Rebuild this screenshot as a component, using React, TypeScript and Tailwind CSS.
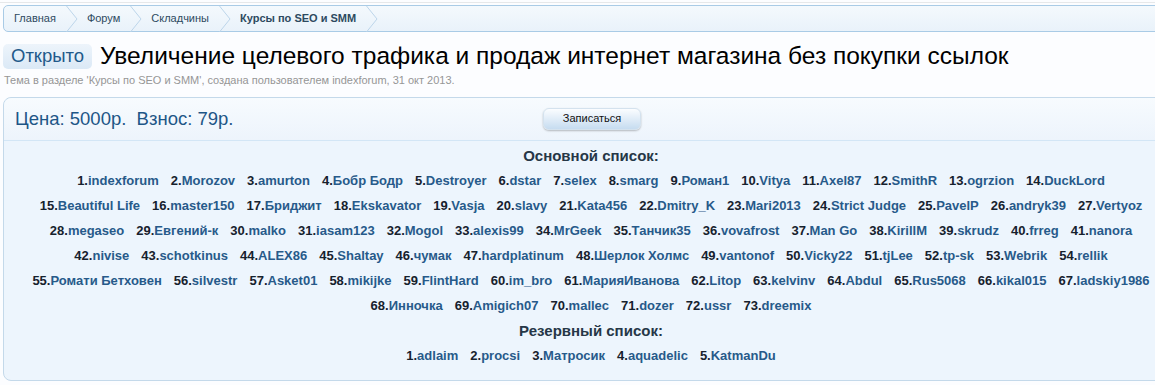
import React from 'react';

const crumbs = ['Главная', 'Форум', 'Складчины'];

const mainRows: string[][] = [
  ['indexforum', 'Morozov', 'amurton', 'Бобр Бодр', 'Destroyer', 'dstar', 'selex', 'smarg', 'Роман1', 'Vitya', 'Axel87', 'SmithR', 'ogrzion', 'DuckLord'],
  ['Beautiful Life', 'master150', 'Бриджит', 'Ekskavator', 'Vasja', 'slavy', 'Kata456', 'Dmitry_K', 'Mari2013', 'Strict Judge', 'PavelP', 'andryk39', 'Vertyoz'],
  ['megaseo', 'Евгений-к', 'malko', 'iasam123', 'Mogol', 'alexis99', 'MrGeek', 'Танчик35', 'vovafrost', 'Man Go', 'KirillM', 'skrudz', 'frreg', 'nanora'],
  ['nivise', 'schotkinus', 'ALEX86', 'Shaltay', 'чумак', 'hardplatinum', 'Шерлок Холмс', 'vantonof', 'Vicky22', 'tjLee', 'tp-sk', 'Webrik', 'rellik'],
  ['Ромати Бетховен', 'silvestr', 'Asket01', 'mikijke', 'FlintHard', 'im_bro', 'МарияИванова', 'Litop', 'kelvinv', 'Abdul', 'Rus5068', 'kikal015', 'ladskiy1986'],
  ['Инночка', 'Amigich07', 'mallec', 'dozer', 'ussr', 'dreemix'],
];

const reserve = ['adlaim', 'procsi', 'Матросик', 'aquadelic', 'KatmanDu'];

const Chevron = () => (
  <svg width="12" height="26" viewBox="0 0 12 26" className="shrink-0">
    <polyline points="0.5,0 11,13 0.5,26" fill="none" stroke="#bcd5ea" strokeWidth="1" />
  </svg>
);

const Entry = ({ n, name }: { n: number; name: string }) => (
  <span className="font-bold whitespace-nowrap">
    <span className="text-[#16212d]">{n}.</span>
    <span className="text-[#275a8a]">{name}</span>
  </span>
);

export default function App() {
  let counter = 0;
  return (
    <div
      className="min-h-[385px] w-[1155px] overflow-hidden bg-[#fcfdff] pt-[2px]"
      style={{ fontFamily: '"Liberation Sans", Arial, sans-serif' }}
    >
      <div className="border-t border-[#e6e8ea] pt-[2px]">
        {/* breadcrumb */}
        <div className="ml-[3px] flex h-[27px] w-[1170px] items-center rounded-l-[5px] border border-[#a9cbe6] bg-gradient-to-b from-[#f4f9fd] to-[#e9f2fa] pl-[10px] text-[11px] text-[#2d4a60]">
          {crumbs.map((c) => (
            <React.Fragment key={c}>
              <span className="mr-[10px]">{c}</span>
              <Chevron />
              <span className="w-[9px]" />
            </React.Fragment>
          ))}
          <span className="mr-[10px] font-bold">Курсы по SEO и SMM</span>
          <Chevron />
        </div>

        {/* title */}
        <div className="mt-[12px] flex items-center pl-[3px]">
          <span className="flex h-[25px] items-center rounded-[5px] bg-gradient-to-b from-[#edf4fb] to-[#dbe9f6] px-[8px] text-[18.5px] leading-none text-[#22598a]">
            Открыто
          </span>
          <h1 className="ml-[8px] text-[24.5px] leading-none text-black">
            Увеличение целевого трафика и продаж интернет магазина без покупки ссылок
          </h1>
        </div>
        <div className="mt-[3px] pl-[4px] text-[11px] text-[#969696]">
          Тема в разделе 'Курсы по SEO и SMM', создана пользователем indexforum, 31 окт 2013.
        </div>

        {/* card */}
        <div className="mt-[8px] ml-[3px] w-[1164px] rounded-l-[8px] border border-[#c4d9ea] bg-[#edf5fd]">
          <div className="flex h-[42px] items-center rounded-tl-[8px] bg-gradient-to-b from-[#f7fbfe] to-[#edf4fc] pl-[11px]">
            <span className="w-[528px] text-[18.5px] text-[#1e5687]">Цена: 5000р.&nbsp; Взнос: 79р.</span>
            <button className="h-[22px] w-[98px] rounded-[6px] border border-[#d4e2ee] bg-gradient-to-b from-[#fbfdff] to-[#c6dcf0] text-[11px] text-[#111] shadow-[0_1px_2px_rgba(0,0,0,0.25)]">
              Записаться
            </button>
          </div>
          <div className="border-t border-[#d3e6f6] pl-[12px] pt-[2px] pb-[12px] text-center text-[13px] leading-[25px]">
            <div className="text-[15px] font-bold text-[#263747]">Основной список:</div>
            {mainRows.map((row, i) => (
              <div key={i} className="flex justify-center gap-x-[12px]">
                {row.map((name) => {
                  counter += 1;
                  return <Entry key={name} n={counter} name={name} />;
                })}
              </div>
            ))}
            <div className="text-[15px] font-bold text-[#263747]">Резервный список:</div>
            <div className="flex justify-center gap-x-[12px]">
              {reserve.map((name, i) => (
                <Entry key={name} n={i + 1} name={name} />
              ))}
            </div>
          </div>
        </div>
      </div>
    </div>
  );
}
